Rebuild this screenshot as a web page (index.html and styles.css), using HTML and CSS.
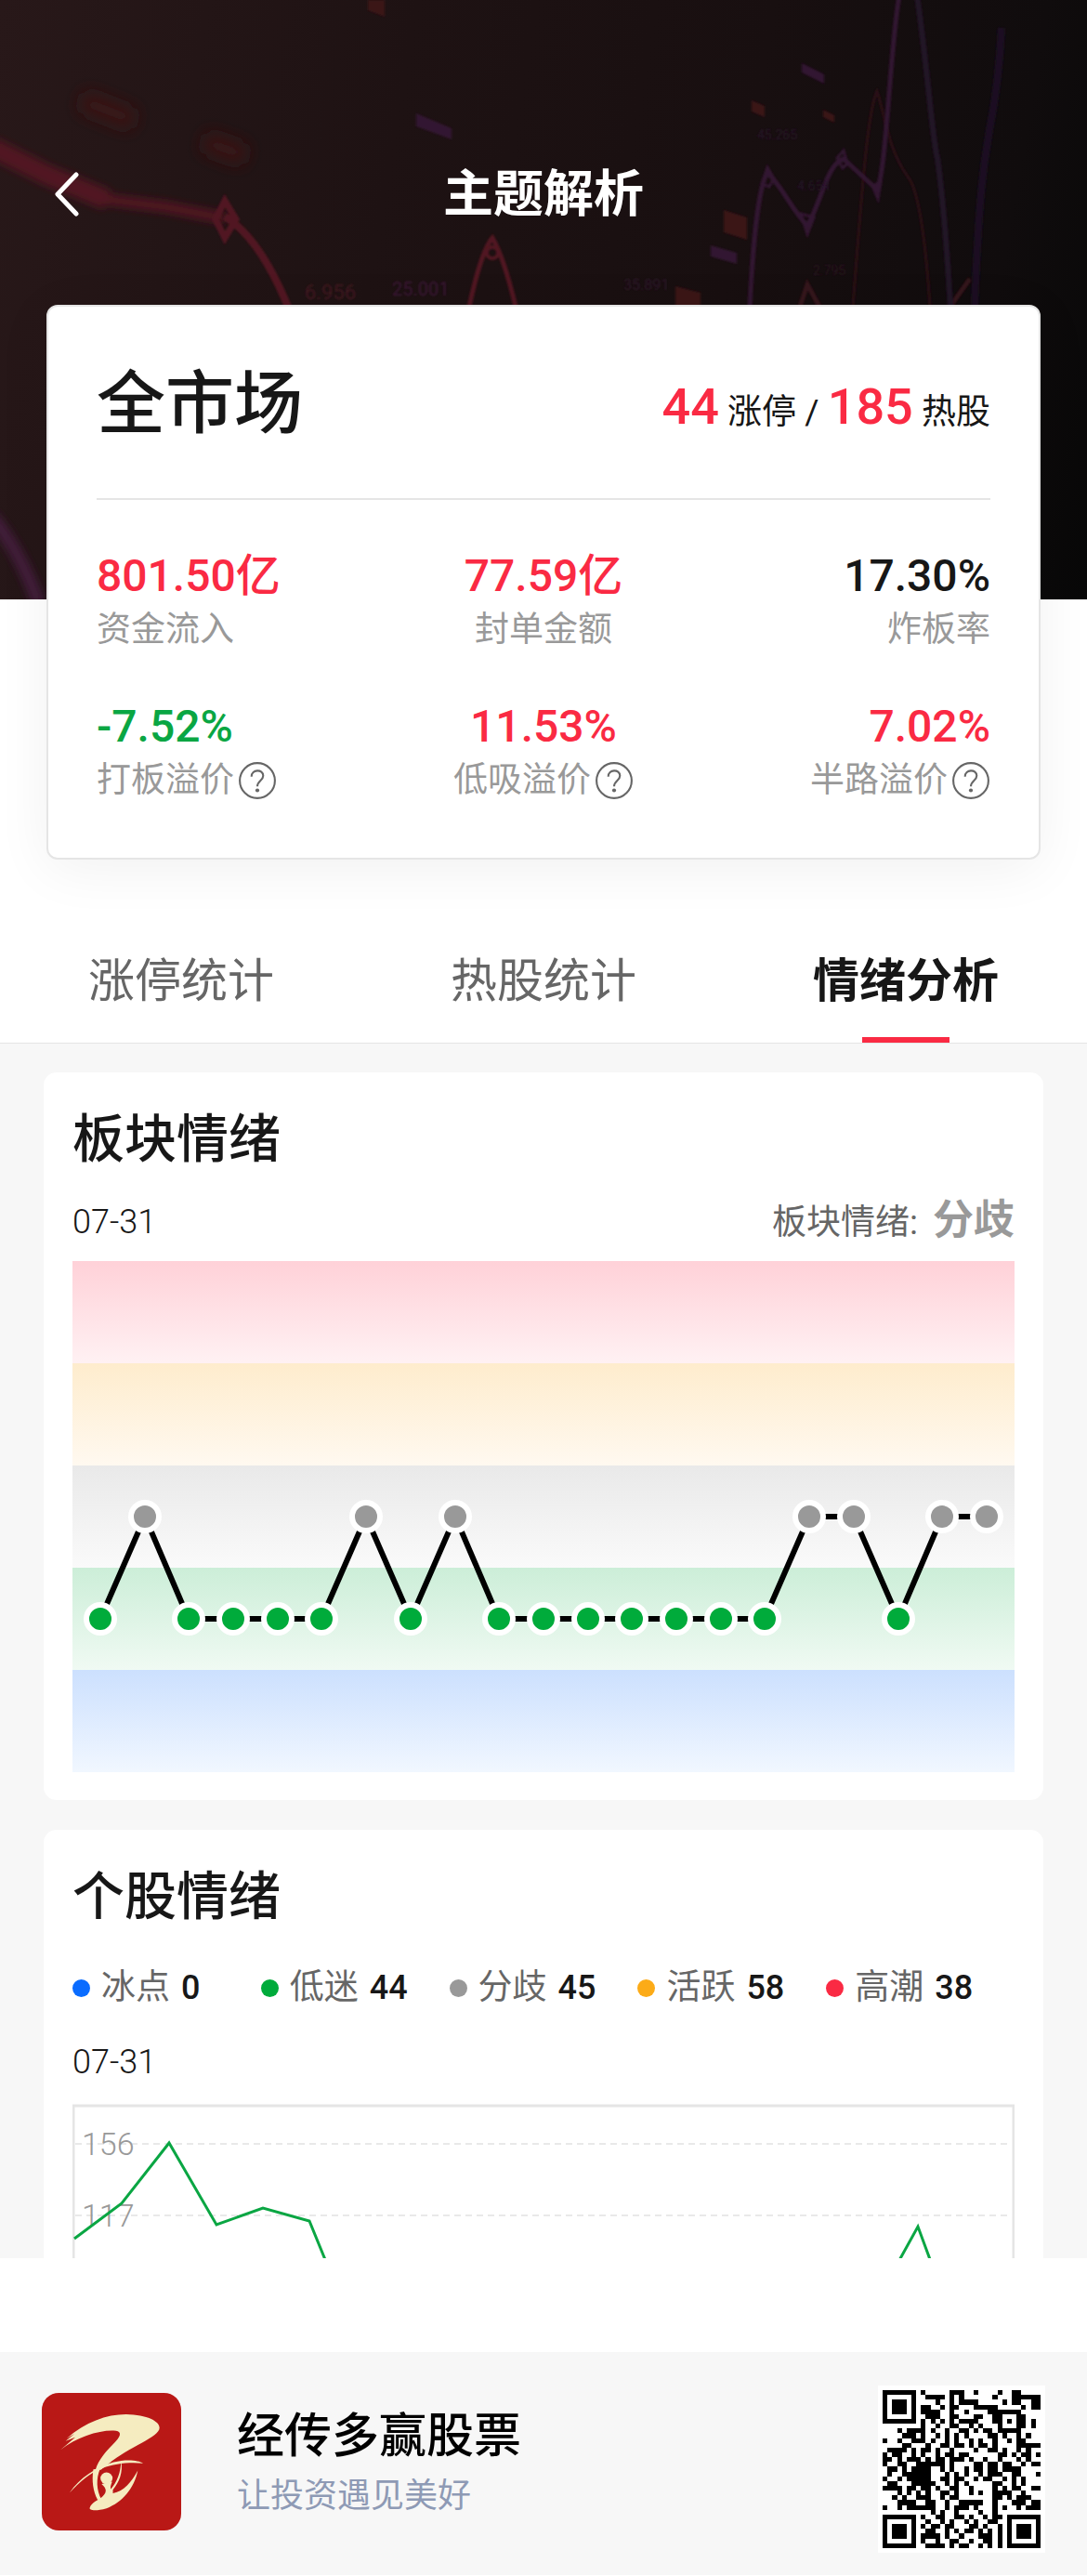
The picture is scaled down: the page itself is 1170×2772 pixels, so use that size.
FILE: index.html
```html
<!DOCTYPE html>
<html lang="zh-CN">
<head>
<meta charset="utf-8">
<meta name="viewport" content="width=device-width, initial-scale=1">
<title>主题解析</title>
<link rel="stylesheet" href="styles.css">
<script src="qr.js" defer></script>
</head>
<body>
<header class="hero">
  <svg class="hero-art" viewBox="0 0 1170 645" preserveAspectRatio="xMidYMid slice" aria-hidden="true">
    <defs>
      <filter id="soft"><feGaussianBlur stdDeviation="4"/></filter>
      <filter id="blob" x="-50%" y="-100%" width="200%" height="300%"><feGaussianBlur stdDeviation="9"/></filter>
      <filter id="slight"><feGaussianBlur stdDeviation="1"/></filter>
    </defs>
    <g fill="none" stroke="#511820" filter="url(#soft)">
      <path d="M-10 158L50 188L115 215" stroke-width="22"/>
      <path d="M110 214L180 223L242 235" stroke-width="12"/>
      <path d="M-10 555Q20 590 42 650" stroke="#421b3b" stroke-width="14"/>
    </g>
    <path d="M88 108l56 22M220 152l44 16" fill="none" stroke="#3a1317" stroke-width="22" filter="url(#blob)"/>
    <g fill="none" stroke="#511820" filter="url(#slight)">
      <path d="M242 233C270 250 292 285 312 335" stroke-width="8"/>
      <path d="M242 216L254 236L242 256L232 236Z" stroke-width="7"/>
      <path d="M505 330Q518 270 530 256Q542 276 555 330" stroke-width="5"/>
      <circle cx="530" cy="272" r="6" stroke-width="4"/>
      <path d="M918 330C926 230 933 120 944 98C954 130 956 160 977 190C990 205 997 270 1001 330" stroke="#2c1016" stroke-width="3"/>
      <path d="M861 330L869 306L882 330M1024 328L1044 300" stroke="#36121a" stroke-width="5"/>
    </g>
    <g fill="none" stroke="#331430" filter="url(#slight)">
      <path d="M807 330C810 270 816 200 826 186C840 198 852 225 869 243C884 218 890 176 908 171L944 204C954 185 958 50 968 -5" stroke-width="5"/>
      <path d="M987 -5C998 70 1004 155 1009 170C1016 220 1020 280 1023 330" stroke="#221228" stroke-width="6"/>
      <path d="M1049 330C1054 200 1060 170 1065 140Q1075 90 1078 30" stroke="#1a1020" stroke-width="8"/>
      <path d="M820 198l6-18l7 12l-5 9zM862 230l7 22l7-18zM901 170l7-8l4 14l-5 5zM939 200l6 14l3-18z" stroke-width="3"/>
    </g>
    <g filter="url(#slight)">
      <path d="M448 122l38 16v12l-38-14zM863 68l24 12v10l-24-12zM765 264l28 8v12l-28-8z" fill="#321630"/>
      <path d="M396 0h18v18l-18-7zM809 108l14 6v12l-14-6zM886 118l12 6v8l-12-6zM779 226l25 8v24l-25-8zM727 308l27 7v20h-27z" fill="#3b1217"/>
      <g font-family="Roboto" font-size="22">
        <text x="328" y="322" fill="#431a20" font-size="22">6.956</text>
        <text x="422" y="318" fill="#3c1937" font-size="20">25.001</text>
        <text x="671" y="312" fill="#2e172c" font-size="16">35.891</text>
        <text x="815" y="150" fill="#28142a" font-size="14">45.265</text>
        <text x="858" y="205" fill="#25132a" font-size="14">4.654</text>
        <text x="875" y="296" fill="#2a1320" font-size="14">2.795</text>
      </g>
    </g>
  </svg>
  <nav class="nav">
    <button class="back" type="button" aria-label="返回">
      <svg viewBox="0 0 30 50" width="30" height="50"><path d="M26 3L6 24L26 45" fill="none" stroke="#fff" stroke-width="5" stroke-linecap="round" stroke-linejoin="round"/></svg>
    </button>
    <h1>主题解析</h1>
  </nav>
</header>

<section class="summary">
  <div class="summary-head">
    <h2>全市场</h2>
    <p class="counts"><strong>44</strong> 涨停 / <strong>185</strong> 热股</p>
  </div>
  <dl class="stats">
    <div class="stat"><dd class="up">801.50亿</dd><dt>资金流入</dt></div>
    <div class="stat"><dd class="up">77.59亿</dd><dt>封单金额</dt></div>
    <div class="stat"><dd>17.30%</dd><dt>炸板率</dt></div>
    <div class="stat"><dd class="down">-7.52%</dd><dt>打板溢价<button class="help" type="button" aria-label="打板溢价说明"><svg viewBox="0 0 40 40"><use href="#question"/></svg></button></dt></div>
    <div class="stat"><dd class="up">11.53%</dd><dt>低吸溢价<button class="help" type="button" aria-label="低吸溢价说明"><svg viewBox="0 0 40 40"><use href="#question"/></svg></button></dt></div>
    <div class="stat"><dd class="up">7.02%</dd><dt>半路溢价<button class="help" type="button" aria-label="半路溢价说明"><svg viewBox="0 0 40 40"><use href="#question"/></svg></button></dt></div>
  </dl>
</section>

<div class="tabs" role="tablist">
  <button type="button" role="tab" aria-selected="false">涨停统计</button>
  <button type="button" role="tab" aria-selected="false">热股统计</button>
  <button type="button" role="tab" aria-selected="true">情绪分析</button>
</div>

<main class="content">
  <section class="card">
    <h3>板块情绪</h3>
    <div class="meta">
      <time>07-31</time>
      <p class="mood">板块情绪: <b>分歧</b></p>
    </div>
    <svg class="chart" viewBox="0 0 1014 550" role="img" aria-label="板块情绪走势">
      <defs>
        <linearGradient id="b1" x2="0" y2="1"><stop stop-color="#ffd1d8"/><stop offset="1" stop-color="#fff1f3"/></linearGradient>
        <linearGradient id="b2" x2="0" y2="1"><stop stop-color="#feeccd"/><stop offset="1" stop-color="#fff9f0"/></linearGradient>
        <linearGradient id="b3" x2="0" y2="1"><stop stop-color="#e9e9e9"/><stop offset="1" stop-color="#fafafa"/></linearGradient>
        <linearGradient id="b4" x2="0" y2="1"><stop stop-color="#cceed8"/><stop offset="1" stop-color="#f0faf3"/></linearGradient>
        <linearGradient id="b5" x2="0" y2="1"><stop stop-color="#cce0fe"/><stop offset="1" stop-color="#f1f7ff"/></linearGradient>
        <circle id="low" r="15" fill="#00ab3b" stroke="#fff" stroke-width="6"/>
        <circle id="mid" r="15" fill="#999" stroke="#fff" stroke-width="6"/>
      </defs>
      <rect width="1014" height="110" fill="url(#b1)"/>
      <rect y="110" width="1014" height="110" fill="url(#b2)"/>
      <rect y="220" width="1014" height="110" fill="url(#b3)"/>
      <rect y="330" width="1014" height="110" fill="url(#b4)"/>
      <rect y="440" width="1014" height="110" fill="url(#b5)"/>
      <polyline fill="none" stroke="#000" stroke-width="6" points="30,385 78,275 125,385 268,385 316,275 364,385 412,275 459,385 745,385 793,275 841,275 889,385 936,275 984,275"/>
      <use href="#low" x="30" y="385"/><use href="#mid" x="78" y="275"/><use href="#low" x="125" y="385"/>
      <use href="#low" x="173" y="385"/><use href="#low" x="221" y="385"/><use href="#low" x="268" y="385"/>
      <use href="#mid" x="316" y="275"/><use href="#low" x="364" y="385"/><use href="#mid" x="412" y="275"/>
      <use href="#low" x="459" y="385"/><use href="#low" x="507" y="385"/><use href="#low" x="555" y="385"/>
      <use href="#low" x="602" y="385"/><use href="#low" x="650" y="385"/><use href="#low" x="698" y="385"/>
      <use href="#low" x="745" y="385"/><use href="#mid" x="793" y="275"/><use href="#mid" x="841" y="275"/>
      <use href="#low" x="889" y="385"/><use href="#mid" x="936" y="275"/><use href="#mid" x="984" y="275"/>
    </svg>
  </section>

  <section class="card card-cut">
    <h3>个股情绪</h3>
    <ul class="legend">
      <li class="ice">冰点 <b>0</b></li>
      <li class="weak">低迷 <b>44</b></li>
      <li class="split">分歧 <b>45</b></li>
      <li class="active">活跃 <b>58</b></li>
      <li class="peak">高潮 <b>38</b></li>
    </ul>
    <time class="date">07-31</time>
    <svg class="chart" viewBox="0 0 1014 166" role="img" aria-label="个股情绪走势">
      <path d="M1 166V2H1013V166" fill="none" stroke="#e5e5e5" stroke-width="3"/>
      <path d="M3 43H1010M3 120H1010" stroke="#e9e9e9" stroke-width="2" stroke-dasharray="7 5"/>
      <g class="axis"><text x="10" y="55">156</text><text x="10" y="132">117</text></g>
      <path d="M2 145L53 107L104 42L155 130L205 112L255 126L273 170M889 170L910 132L924 170" fill="none" stroke="#0aa643" stroke-width="3"/>
    </svg>
  </section>
</main>

<footer class="brand">
  <div class="brand-info">
    <svg class="logo" viewBox="118 228 392 443" preserveAspectRatio="none" role="img" aria-label="经传多赢">
      <rect x="118" y="228" width="392" height="443" rx="48" ry="54" fill="#b91816"/>
      <g fill="#f5ecc0">
        <path d="M170 412L212 371L185 383L210 360L188 375C240 322 300 297 355 297C415 298 449 320 449 340C449 370 365 400 305 457L284 476L269 476C278 440 300 415 325 385C345 360 340 350 320 349C280 347 215 370 170 412Z"/>
        <path d="M196 550C225 500 270 468 320 451C355 441 390 444 403 455C370 450 320 455 290 470C250 488 225 515 196 550Z"/>
        <path d="M263 474C258 510 262 545 275 572L285 570C272 540 270 505 282 472Z"/>
        <ellipse cx="300" cy="503" rx="17" ry="19"/>
        <path d="M341 446C347 485 336 515 318 540L318 551C350 545 370 515 388 478C378 535 345 580 300 600C270 610 250 607 253 598C257 580 280 572 290 560C302 546 300 535 286 521L316 514C312 525 310 532 312 538C330 515 340 485 341 446Z"/>
      </g>
    </svg>
    <div>
      <p class="brand-name">经传多赢股票</p>
      <p class="brand-slogan">让投资遇见美好</p>
    </div>
  </div>
  <svg class="qr" viewBox="-1 -1 35 35" shape-rendering="crispEdges" role="img" aria-label="二维码"><path id="qr-path"/></svg>
</footer>

<svg width="0" height="0" class="sprite" aria-hidden="true">
  <symbol id="question" viewBox="0 0 40 40">
    <circle cx="20" cy="20" r="18" fill="none" stroke="#666" stroke-width="2"/>
    <path d="M14 16C14 8 26 8 26 15C26 20 20 20 20 26" fill="none" stroke="#666" stroke-width="2"/>
    <circle cx="20" cy="30" r="2" fill="#666"/>
  </symbol>
</svg>
</body>
</html>
```
FILE: styles.css
```css
* {
  box-sizing: border-box;
}

body {
  margin: 0;
  background: #fff;
  color: #171717;
  font-family: Roboto, "Noto Sans CJK SC", sans-serif;
  font-size: 36px;
}

h1, h2, h3, p, dl, dd, ul {
  margin: 0;
  padding: 0;
}

button {
  padding: 0;
  border: 0;
  background: none;
  color: inherit;
  font: inherit;
}

.sprite {
  position: absolute;
}

.hero {
  position: relative;
  padding: 170px 56px 395px;
  overflow: hidden;
  background: linear-gradient(100deg, #281819 0%, #1e1213 35%, #180f10 65%, #100c0d 88%, #080808 100%);
}

.hero-art {
  position: absolute;
  inset: 0;
  width: 100%;
  height: 100%;
}

.nav {
  position: relative;
  display: grid;
  grid-template-columns: 60px 1fr 60px;
  align-items: center;
  color: #fff;
}

.back {
  display: flex;
}

.nav h1 {
  font-size: 54px;
  font-weight: 700;
  line-height: 80px;
  text-align: center;
}

.summary {
  position: relative;
  margin: -317px 50px 0;
  padding: 0 52px 55px;
  border: 2px solid #e5e5e5;
  border-radius: 12px;
  background: #fff;
  box-shadow: 0 10px 60px rgba(0, 0, 0, 0.06);
}

.summary-head {
  display: flex;
  align-items: center;
  justify-content: space-between;
  padding: 50px 0 46px;
  border-bottom: 2px solid #e5e5e5;
}

.summary h2 {
  font-size: 74px;
  font-weight: 500;
  line-height: 110px;
}

.counts {
  padding-top: 12px;
  font-size: 37px;
  line-height: 60px;
}

.counts strong {
  color: #fa2a43;
  font-size: 54px;
  font-weight: 500;
}

.stats {
  display: grid;
  grid-template-columns: repeat(3, 1fr);
  row-gap: 46px;
  padding-top: 52px;
}

.stat {
  display: flex;
  flex-direction: column;
}

.stat:nth-child(3n + 2) {
  align-items: center;
}

.stat:nth-child(3n) {
  align-items: flex-end;
}

.stat dd {
  font-size: 48px;
  font-weight: 500;
  line-height: 60px;
}

.stat dt {
  display: flex;
  align-items: center;
  gap: 4px;
  color: #999;
  font-size: 37px;
  line-height: 56px;
}

.up {
  color: #fa2a43;
}

.down {
  color: #0aa643;
}

.help {
  display: flex;
  width: 42px;
  height: 42px;
}

.tabs {
  display: grid;
  grid-template-columns: repeat(3, 1fr);
  margin-top: 58px;
  border-bottom: 1px solid #e5e5e5;
}

.tabs button {
  display: flex;
  flex-direction: column;
  align-items: center;
  padding-top: 36px;
  color: #666;
  font-size: 50px;
  line-height: 74px;
}

.tabs button::after {
  content: "";
  width: 94px;
  height: 6px;
  margin-top: 23px;
}

.tabs [aria-selected="true"] {
  color: #171717;
  font-weight: 700;
}

.tabs [aria-selected="true"]::after {
  background: #fa2a43;
}

.content {
  display: flex;
  flex-direction: column;
  gap: 32px;
  padding: 31px 47px 0;
  background: #f7f7f7;
}

.card {
  padding: 32px 31px 30px;
  border-radius: 14px;
  background: #fff;
}

.card-cut {
  padding-bottom: 0;
  border-radius: 14px 14px 0 0;
}

.card h3 {
  font-size: 56px;
  font-weight: 500;
  line-height: 80px;
}

.meta {
  display: flex;
  align-items: center;
  justify-content: space-between;
  padding: 15px 0 9px;
}

.meta time,
.date {
  font-weight: 300;
  line-height: 64px;
}

.mood {
  display: flex;
  align-items: baseline;
  gap: 16px;
  color: #666;
  font-size: 37px;
  line-height: 64px;
}

.mood b {
  color: #999;
  font-size: 44px;
}

.chart {
  display: block;
  width: 100%;
}

.axis {
  fill: #999;
  font-size: 34px;
  font-weight: 300;
}

.legend {
  display: grid;
  grid-template-columns: repeat(5, 1fr);
  padding: 28px 0 18px;
  list-style: none;
}

.legend li {
  display: flex;
  align-items: center;
  gap: 12px;
  color: #666;
  font-size: 37px;
  line-height: 60px;
}

.legend li::before {
  content: "";
  width: 19px;
  height: 19px;
  border-radius: 50%;
  background: currentColor;
}

.legend b {
  color: #171717;
  font-size: 36px;
  font-weight: 500;
}

.legend .ice::before {
  background: #0a6cff;
}

.legend .weak::before {
  background: #00ab3b;
}

.legend .split::before {
  background: #999;
}

.legend .active::before {
  background: #fcab17;
}

.legend .peak::before {
  background: #fa2a43;
}

.date {
  display: block;
  padding-bottom: 13px;
}

.brand {
  display: flex;
  align-items: flex-start;
  justify-content: space-between;
  margin-top: 101px;
  padding: 36px 45px 24px;
  background: #f7f7f7;
}

.brand-info {
  display: flex;
  align-items: center;
  gap: 60px;
  padding-top: 8px;
}

.logo {
  width: 150px;
  height: 148px;
}

.brand-name {
  color: #000;
  font-size: 51px;
  font-weight: 500;
  line-height: 74px;
}

.brand-slogan {
  color: #8e9ab5;
  line-height: 54px;
}

.qr {
  width: 180px;
  height: 180px;
  background: #fff;
}
```
FILE: qr.js
```js
// Dark modules of the download code, one string per row.
const rows = [
  "#######.#.....###..#....#..##....",
  "#.....#..####.#.#......#...######",
  "#.###.#....#..#.####.....#.##..##",
  "#.###.#.##..#.##...#####.....#.##",
  "#.###.#.####..#..#....#######....",
  "#.....#..###..##...##..##...##...",
  "#######.#.#.#.#.####...##.#.##.#.",
  "........#..#..##..#.#...#...##.#.",
  "...#.####.#..#..##.#.##.#####....",
  "....###.#..#.#.#.#....##.#..#.#..",
  "#..#..###.#..#.#..#.#..#..#.##...",
  "....##...#..##.##.#.##.#....#####",
  ".####.#.##.#..#....#..##.#..#.#..",
  "#.##..#.#..#.##.##......##.#.##.#",
  "##.#.###.#.##.###.#..#..#...#.#..",
  "#..##..######.#....##.##.##..#.##",
  ".##.#.####..#.#..#.##.##.####....",
  ".#..######...#.#.#..#.###..##...#",
  "#..#.#####..##.##..#.##..#.#.#...",
  ".##...#####..#.#.#.....##..#.#...",
  "####.##.##.#..##..#....#.#.##..##",
  "...#.#.#.#..##.#..#.#..####..#...",
  "..#.#..###..#.##.......##.#.###..",
  "...####..##..#..#####..#...###.##",
  "#..#.######..#.###.#...#.#..#.###",
  "..........#.#..#....#..#.........",
  "#######.#..##..##.#..#.##.#######",
  "#.....#..#..#.#..#.#..##..#.....#",
  "#.###.#.#.##.##...##.#..#.#.###.#",
  "#.###.#..##..#.#.##.#.#.#.#.###.#",
  "#.###.#.####.#..#...###.#.#.###.#",
  "#.....#.#..#..##..#..##.#.#.....#",
  "#######..####.#.##..#.#.#.#######"
];

let d = "";
rows.forEach((row, y) => {
  [...row].forEach((cell, x) => {
    if (cell === "#") d += `M${x} ${y}h1v1h-1z`;
  });
});
document.getElementById("qr-path").setAttribute("d", d);
```
